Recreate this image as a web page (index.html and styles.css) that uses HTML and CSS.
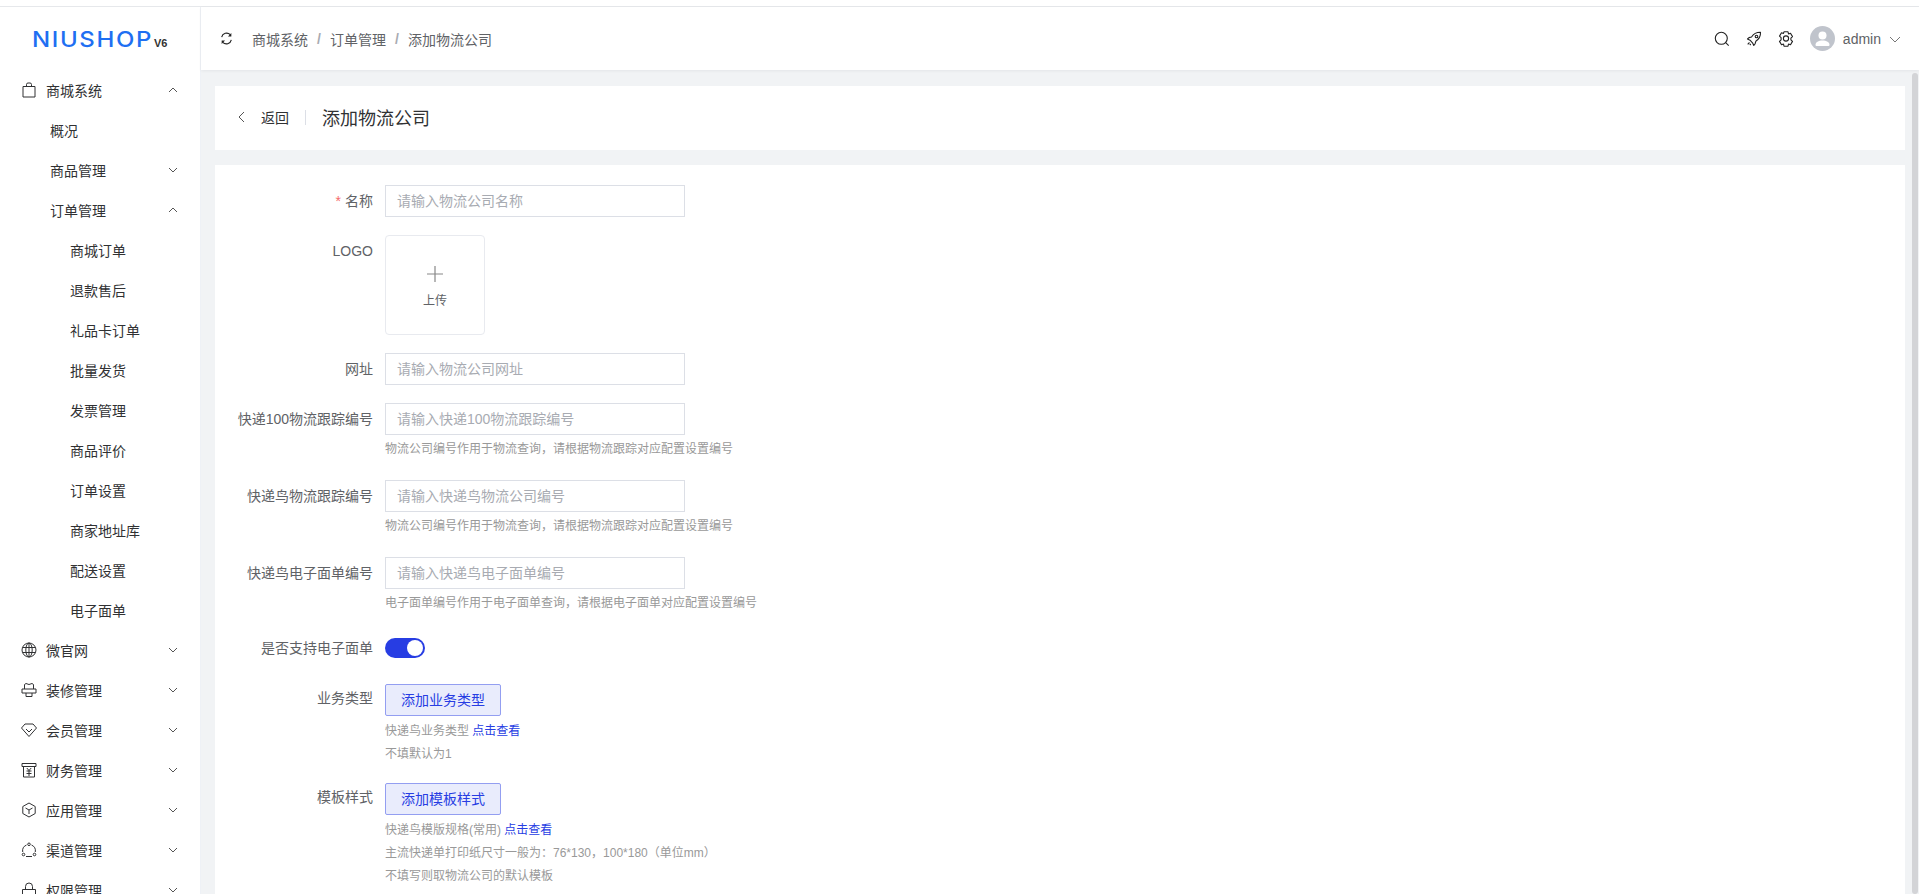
FILE: index.html
```html
<!DOCTYPE html>
<html lang="zh-CN">
<head>
<meta charset="utf-8">
<title>添加物流公司</title>
<link rel="stylesheet" href="styles.css">
</head>
<body>
<div class="app">
  <aside class="sidebar">
    <div class="logo"><span class="logo-main"><span class="logo-glyphs">NIUSHOP</span></span><span class="logo-ver">V6</span></div>
    <nav class="menu">
      <div class="row top"><svg class="ico" viewBox="0 0 16 16"><path d="M2 4.500h12V15H2zM5.500 4.500V2.500A1.500 1.500 0 0 1 7 1h2a1.500 1.500 0 0 1 1.500 1.500v2"/></svg><span>商城系统</span><svg class="chev" viewBox="0 0 12 12"><path d="M2 8l4-4 4 4"/></svg></div>
      <div class="row sub"><span>概况</span></div>
      <div class="row sub"><span>商品管理</span><svg class="chev" viewBox="0 0 12 12"><path d="M2 4l4 4 4-4"/></svg></div>
      <div class="row sub"><span>订单管理</span><svg class="chev" viewBox="0 0 12 12"><path d="M2 8l4-4 4 4"/></svg></div>
      <div class="row leaf"><span>商城订单</span></div>
      <div class="row leaf"><span>退款售后</span></div>
      <div class="row leaf"><span>礼品卡订单</span></div>
      <div class="row leaf"><span>批量发货</span></div>
      <div class="row leaf"><span>发票管理</span></div>
      <div class="row leaf"><span>商品评价</span></div>
      <div class="row leaf"><span>订单设置</span></div>
      <div class="row leaf"><span>商家地址库</span></div>
      <div class="row leaf"><span>配送设置</span></div>
      <div class="row leaf"><span>电子面单</span></div>
      <div class="row top"><svg class="ico" viewBox="0 0 16 16"><circle cx="8" cy="8" r="7"/><ellipse cx="8" cy="8" rx="3.200" ry="7"/><path d="M1.500 5.500h13M1.500 10.500h13M8 1v14"/></svg><span>微官网</span><svg class="chev" viewBox="0 0 12 12"><path d="M2 4l4 4 4-4"/></svg></div>
      <div class="row top"><svg class="ico" viewBox="0 0 16 16"><path d="M3.500 7V2.500L5 1.500l3 1 3-1 1.500 1V7M1 7h14v4H1zM5 11v3.500h6V11"/></svg><span>装修管理</span><svg class="chev" viewBox="0 0 12 12"><path d="M2 4l4 4 4-4"/></svg></div>
      <div class="row top"><svg class="ico" viewBox="0 0 16 16"><path d="M4 2h8l3.500 4L8 14.500.5 6zM5 7l3 3 3-3"/></svg><span>会员管理</span><svg class="chev" viewBox="0 0 12 12"><path d="M2 4l4 4 4-4"/></svg></div>
      <div class="row top"><svg class="ico" viewBox="0 0 16 16"><path d="M1 1.500h14v3H1zM2.500 4.500V15h11V4.500M5.800 6L8 8.500 10.200 6M5.500 9h5M5.500 11.500h5M8 8.500V14"/></svg><span>财务管理</span><svg class="chev" viewBox="0 0 12 12"><path d="M2 4l4 4 4-4"/></svg></div>
      <div class="row top"><svg class="ico" viewBox="0 0 16 16"><path d="M8 1l6.200 3.500v7L8 15l-6.200-3.500v-7zM4.500 6L8 8l3.500-2M8 8v4"/></svg><span>应用管理</span><svg class="chev" viewBox="0 0 12 12"><path d="M2 4l4 4 4-4"/></svg></div>
      <div class="row top"><svg class="ico" viewBox="0 0 16 16"><path d="M5.500 3A6.500 6.500 0 0 0 1.700 10M10.500 3a6.500 6.500 0 0 1 3.800 7M5 14.500h6"/><circle cx="8" cy="2.300" r="1.300"/><circle cx="2.500" cy="12.500" r="1.300"/><circle cx="13.500" cy="12.500" r="1.300"/></svg><span>渠道管理</span><svg class="chev" viewBox="0 0 12 12"><path d="M2 4l4 4 4-4"/></svg></div>
      <div class="row top"><svg class="ico" viewBox="0 0 16 16"><path d="M1.500 7.500h13V15h-13zM4.500 7.500V4.500a3.500 3.500 0 0 1 7 0v3"/></svg><span>权限管理</span><svg class="chev" viewBox="0 0 12 12"><path d="M2 4l4 4 4-4"/></svg></div>
    </nav>
  </aside>
  <div class="right">
    <header class="header">
      <svg class="refresh" viewBox="0 0 14 14"><path d="M1.800 5.500A5.400 5.400 0 0 1 11 2.900M12.200 8.500A5.400 5.400 0 0 1 3 11.100"/><path class="solid" d="M12.200 1v3.800H8.600zM1.800 13V9.200h3.600z"/></svg>
      <div class="crumbs"><span>商城系统</span><i>/</i><span>订单管理</span><i>/</i><span>添加物流公司</span></div>
      <div class="tools">
        <svg class="tool" viewBox="0 0 16 16"><circle cx="7.300" cy="7.300" r="6"/><path d="M11.700 11.700l3 3"/></svg>
        <svg class="tool" viewBox="0 0 16 16"><path d="M5.500 6C7.500 3 10.500 1.200 14.500 1.300c.2 4-1.700 7-4.700 9L9 13 7.800 14.500 6.500 11.800 4 9.200 1.500 8l1.500-1.400z"/><circle cx="10.500" cy="5.500" r="1.300"/><path d="M3.500 11.500l-1.800 1.800M4.800 13l-1 1"/></svg>
        <svg class="tool" viewBox="0 0 16 16"><path d="M6 .8h4l.5 2.100 2-.7 2 3.400-1.600 1.500v1.800l1.600 1.500-2 3.400-2-.7-.5 2.100H6l-.5-2.100-2 .7-2-3.400 1.600-1.500V6.600L1.500 5.100l2-3.400 2 .7z"/><circle cx="8" cy="7.500" r="2.600"/></svg>
        <div class="user">
          <svg class="avatar" viewBox="0 0 25 25"><circle class="av-bg" cx="12.500" cy="12.500" r="12.500"/><circle class="av-fg" cx="12.500" cy="9.500" r="4"/><path class="av-fg" d="M5.500 19c0-3 3-4.500 7-4.500s7 1.500 7 4.500c0 .8-.6 1-1.500 1H7c-.9 0-1.500-.2-1.500-1z"/></svg>
          <span class="uname">admin</span>
          <svg class="chev uchev" viewBox="0 0 12 12"><path d="M1 4l5 5 5-5"/></svg>
        </div>
      </div>
    </header>
    <main class="main">
      <section class="card pagehead">
        <svg class="back" viewBox="0 0 12 12"><path d="M8 1L3 6l5 5"/></svg>
        <span class="back-text">返回</span>
        <span class="divider"></span>
        <h1 class="title">添加物流公司</h1>
      </section>
      <section class="card form">
        <div class="item"><label class="lbl"><em>*</em>名称</label><div class="ctl"><div class="input">请输入物流公司名称</div></div></div>
        <div class="item"><label class="lbl">LOGO</label><div class="ctl"><div class="upload"><svg class="plus" viewBox="0 0 16 16"><path d="M8 0v16M0 8h16"/></svg><span>上传</span></div></div></div>
        <div class="item"><label class="lbl">网址</label><div class="ctl"><div class="input">请输入物流公司网址</div></div></div>
        <div class="item"><label class="lbl">快递100物流跟踪编号</label><div class="ctl"><div class="input">请输入快递100物流跟踪编号</div><p class="tip">物流公司编号作用于物流查询，请根据物流跟踪对应配置设置编号</p></div></div>
        <div class="item"><label class="lbl">快递鸟物流跟踪编号</label><div class="ctl"><div class="input">请输入快递鸟物流公司编号</div><p class="tip">物流公司编号作用于物流查询，请根据物流跟踪对应配置设置编号</p></div></div>
        <div class="item"><label class="lbl">快递鸟电子面单编号</label><div class="ctl"><div class="input">请输入快递鸟电子面单编号</div><p class="tip">电子面单编号作用于电子面单查询，请根据电子面单对应配置设置编号</p></div></div>
        <div class="item switch-item"><label class="lbl">是否支持电子面单</label><div class="ctl"><div class="switch"><span class="knob"></span></div></div></div>
        <div class="item btn-item"><label class="lbl">业务类型</label><div class="ctl"><div class="btn">添加业务类型</div><p class="tip">快递鸟业务类型 <a class="link">点击查看</a></p><p class="tip">不填默认为1</p></div></div>
        <div class="item btn-item"><label class="lbl">模板样式</label><div class="ctl"><div class="btn">添加模板样式</div><p class="tip">快递鸟模版规格(常用) <a class="link">点击查看</a></p><p class="tip">主流快递单打印纸尺寸一般为：76*130，100*180（单位mm）</p><p class="tip">不填写则取物流公司的默认模板</p></div></div>
      </section>
    </main>
    <div class="scrollbar"></div>
  </div>
</div>
</body>
</html>
```

FILE: styles.css
```css
* { box-sizing: border-box; }
html, body { margin: 0; height: 100%; overflow: hidden; }
body {
  font-family: "Liberation Sans", "Noto Sans CJK SC", sans-serif;
  font-size: 14px;
  color: #303133;
  background: #fff;
}
.app {
  display: flex;
  height: 888px;
  margin-top: 6px;
  border-top: 1px solid #e6e8eb;
}
.sidebar {
  width: 201px;
  flex: none;
  border-right: 1px solid #eef1f6;
  overflow: hidden;
  background: #fff;
}
.logo {
  height: 63px;
  padding-left: 32px;
  display: flex;
  align-items: baseline;
  padding-top: 21px;
}
.logo-main {
  display: inline-block;
  width: 122px;
  flex: none;
  font-family: Inter, sans-serif;
  font-size: 22px;
  line-height: 22px;
  font-weight: 500;
  letter-spacing: 1.5px;
  color: #1f6ff2;
  white-space: nowrap;
}
.logo-glyphs {
  display: inline-block;
  transform: scaleX(1.09);
  transform-origin: left center;
}
.logo-ver {
  font-family: "Liberation Sans", sans-serif;
  font-size: 11px;
  font-weight: 700;
  color: #333;
}
.row {
  height: 40px;
  display: flex;
  align-items: center;
  color: #303133;
  position: relative;
}
.top { padding-left: 21px; }
.sub { padding-left: 50px; }
.leaf { padding-left: 70px; }
.ico {
  width: 16px;
  height: 16px;
  margin-right: 9px;
  flex: none;
  fill: none;
  stroke: #303133;
  stroke-width: 1;
}
.chev {
  width: 12px;
  height: 12px;
  fill: none;
  stroke: #555;
  stroke-width: 1;
  margin-left: auto;
  margin-right: 21px;
  flex: none;
}
.right {
  flex: 1;
  min-width: 0;
  position: relative;
  display: flex;
  flex-direction: column;
}
.header {
  height: 63px;
  flex: none;
  display: flex;
  align-items: center;
  padding-left: 19px;
  background: #fff;
  box-shadow: 0 1px 3px rgba(0, 21, 41, .06);
  position: relative;
}
.refresh {
  width: 13px;
  height: 13px;
  fill: none;
  stroke: #222;
  stroke-width: 1.2;
  margin-right: 19px;
}
.refresh .solid { fill: #222; stroke: none; }
.crumbs { color: #606266; display: flex; align-items: center; }
.crumbs i { font-style: normal; color: #a8abb2; margin: 0 9px; font-weight: 700; width: 4px; text-align: center; }
.tools {
  margin-left: auto;
  display: flex;
  align-items: center;
  padding-right: 18px;
}
.tool {
  width: 16px;
  height: 16px;
  fill: none;
  stroke: #222;
  stroke-width: 1.1;
  stroke-linejoin: round;
  margin-right: 16px;
}
.user { display: flex; align-items: center; }
.avatar { width: 25px; height: 25px; flex: none; }
.av-bg { fill: #c0c4cc; }
.av-fg { fill: #fff; }
.uname { color: #606266; margin-left: 8px; font-size: 14px; }
.uchev { margin-left: 8px; margin-right: 0; stroke: #777; }
.main {
  flex: 1;
  background: #f1f3f5;
  padding: 16px 14px 0 14px;
  overflow: hidden;
}
.card { background: #fff; }
.pagehead {
  height: 64px;
  display: flex;
  align-items: center;
  padding-left: 21px;
  padding-bottom: 2px;
  margin-bottom: 15px;
}
.back { width: 12px; height: 12px; fill: none; stroke: #555; stroke-width: 1; }
.back-text { margin-left: 13px; color: #303133; }
.divider { width: 1px; height: 15px; background: #dcdfe6; margin: 0 16px; }
.title { margin: 0; font-size: 18px; font-weight: 400; color: #303133; }
.form { padding-top: 20px; height: 800px; }
.item { display: flex; margin-bottom: 18px; }
.lbl {
  width: 170px;
  flex: none;
  text-align: right;
  line-height: 32px;
  padding-right: 12px;
  color: #606266;
}
.lbl em { font-style: normal; color: #f56c6c; margin-right: 4px; }
.ctl { flex: 1; min-width: 0; }
.input {
  width: 300px;
  height: 32px;
  border: 1px solid #dcdfe6;
  padding: 0 11px;
  line-height: 30px;
  color: #a8abb2;
}
.upload {
  width: 100px;
  height: 100px;
  border: 1px solid #e8eaef;
  border-radius: 4px;
  display: flex;
  flex-direction: column;
  align-items: center;
  padding-top: 30px;
  font-size: 12px;
  color: #606266;
}
.plus { width: 16px; height: 16px; fill: none; stroke: #888; stroke-width: 1.2; margin-bottom: 9px; }
.tip {
  margin: 5px 0 0;
  font-size: 12px;
  line-height: 18px;
  color: #999;
  white-space: nowrap;
}
.item:has(.tip) { margin-bottom: 22px; }
.link { color: #273de3; }
.switch-item { margin-top: -2px; margin-bottom: 20px; }
.switch {
  width: 40px;
  height: 20px;
  margin-top: 6px;
  border-radius: 10px;
  background: #273de3;
  display: flex;
  justify-content: flex-end;
  align-items: center;
  padding-right: 2px;
}
.knob { width: 16px; height: 16px; border-radius: 50%; background: #fff; }
.btn-item.item { margin-bottom: 20px; }
.btn-item .lbl { line-height: 29px; }
.btn {
  width: 116px;
  height: 32px;
  margin-bottom: 6px;
  line-height: 30px;
  text-align: center;
  border: 1px solid #939ef1;
  border-radius: 2px;
  background: #e9ecfc;
  color: #273de3;
}
.scrollbar {
  position: absolute;
  right: 1px;
  top: 66px;
  width: 6px;
  height: 821px;
  border-radius: 3px;
  background: #d3d4d7;
}
```
